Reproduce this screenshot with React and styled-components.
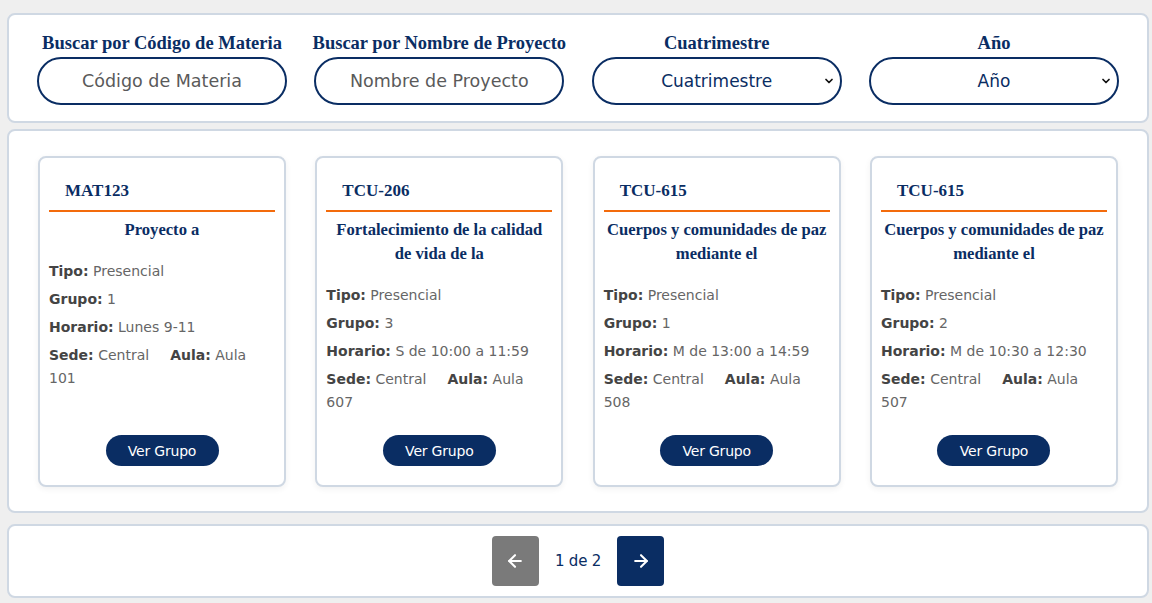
import React from "react";
import styled, { createGlobalStyle } from "styled-components";
import { ArrowLeft, ArrowRight, ChevronDown } from "lucide-react";

const NAVY = "#0a2d63";
const SERIF = `"Liberation Serif", "DejaVu Serif", serif`;
const SANS = `"DejaVu Sans", "Liberation Sans", sans-serif`;

const Global = createGlobalStyle`
  html, body { margin: 0; padding: 0; background: #efefef; }
  body { font-family: ${SANS}; }
  * { box-sizing: border-box; }
`;

const Page = styled.div`
  display: flex;
  flex-direction: column;
  padding: 13px 3px 5px 7px;
`;

const Panel = styled.section`
  background: #fff;
  border: 2px solid #cfd8e3;
  border-radius: 8px;
  margin-bottom: ${(p) => p.$mb || 0}px;
`;

const FilterGrid = styled.div`
  display: grid;
  grid-template-columns: repeat(4, 250px);
  justify-content: space-between;
  padding: 18px 28px 16px;
`;

const Field = styled.div`
  display: flex;
  flex-direction: column;
  align-items: center;
`;

const Label = styled.label`
  font-family: ${SERIF};
  font-weight: bold;
  font-size: 18.5px;
  line-height: 21px;
  color: ${NAVY};
  margin-bottom: 3px;
  white-space: nowrap;
`;

const Input = styled.input`
  width: 250px;
  height: 48px;
  border: 2px solid ${NAVY};
  border-radius: 24px;
  text-align: center;
  font-family: ${SANS};
  font-size: 17.5px;
  color: #555;
  background: #fff;
  outline: none;
  &::placeholder { color: #5a5a5a; }
`;

const SelectWrap = styled.div`
  position: relative;
  width: 250px;
`;

const Select = styled.select`
  appearance: none;
  width: 250px;
  height: 48px;
  border: 2px solid ${NAVY};
  border-radius: 24px;
  text-align: center;
  text-align-last: center;
  font-family: ${SANS};
  font-size: 17px;
  color: ${NAVY};
  background: #fff;
  outline: none;
`;

const Chevron = styled.span`
  position: absolute;
  right: 7px;
  top: 18px;
  display: flex;
  color: #111;
  pointer-events: none;
`;

const CardGrid = styled.div`
  display: grid;
  grid-template-columns: repeat(4, 248px);
  justify-content: space-between;
  padding: 25px 29px 24px 29px;
`;

const Card = styled.article`
  height: 331px;
  display: flex;
  flex-direction: column;
  border: 2px solid #cfd8e3;
  border-radius: 8px;
  padding: 0 9px 19px;
  box-shadow: 0 2px 6px rgba(0, 0, 0, 0.06);
  background: #fff;
`;

const CardHeader = styled.div`
  font-family: ${SERIF};
  font-weight: bold;
  font-size: 17px;
  line-height: 20px;
  color: ${NAVY};
  padding: 23px 0 9px 16px;
  border-bottom: 2px solid #f36b0c;
`;

const CardTitle = styled.h3`
  margin: 6px 0 18px;
  font-family: ${SERIF};
  font-weight: bold;
  font-size: 16.6px;
  line-height: 24px;
  color: ${NAVY};
  text-align: center;
`;

const Detail = styled.p`
  margin: 0 0 5px;
  font-size: 14px;
  line-height: 23px;
  color: #666;
`;

const Key = styled.b`
  font-weight: bold;
  color: #444;
`;

const Gap = styled.span`
  display: inline-block;
  width: 21px;
`;

const Button = styled.button`
  margin: auto auto 0;
  width: 113px;
  height: 31px;
  border: none;
  border-radius: 16px;
  background: ${NAVY};
  color: #fff;
  font-family: ${SANS};
  font-size: 14px;
  letter-spacing: -0.2px;
`;

const Pager = styled.div`
  display: flex;
  align-items: center;
  justify-content: center;
  gap: 16px;
  padding: 10px 0 10px;
`;

const PageBtn = styled.button`
  width: 47px;
  height: 50px;
  border: none;
  border-radius: 4px;
  background: ${(p) => (p.$disabled ? "#7a7a7a" : NAVY)};
  color: #fff;
  display: flex;
  align-items: center;
  justify-content: center;
`;

const PageText = styled.span`
  font-size: 15px;
  color: ${NAVY};
  letter-spacing: -0.2px;
`;

const cards = [
  { code: "MAT123", title: "Proyecto a", grupo: "1", horario: "Lunes 9-11", aula: "101" },
  { code: "TCU-206", title: "Fortalecimiento de la calidad de vida de la", grupo: "3", horario: "S de 10:00 a 11:59", aula: "607" },
  { code: "TCU-615", title: "Cuerpos y comunidades de paz mediante el", grupo: "1", horario: "M de 13:00 a 14:59", aula: "508" },
  { code: "TCU-615", title: "Cuerpos y comunidades de paz mediante el", grupo: "2", horario: "M de 10:30 a 12:30", aula: "507" },
];

export default function App() {
  return (
    <Page>
      <Global />
      <Panel $mb={6}>
        <FilterGrid>
          <Field>
            <Label>Buscar por Código de Materia</Label>
            <Input placeholder="Código de Materia" />
          </Field>
          <Field>
            <Label>Buscar por Nombre de Proyecto</Label>
            <Input placeholder="Nombre de Proyecto" />
          </Field>
          <Field>
            <Label>Cuatrimestre</Label>
            <SelectWrap>
              <Select defaultValue="">
                <option value="">Cuatrimestre</option>
              </Select>
              <Chevron><ChevronDown size={12} strokeWidth={3.5} /></Chevron>
            </SelectWrap>
          </Field>
          <Field>
            <Label>Año</Label>
            <SelectWrap>
              <Select defaultValue="">
                <option value="">Año</option>
              </Select>
              <Chevron><ChevronDown size={12} strokeWidth={3.5} /></Chevron>
            </SelectWrap>
          </Field>
        </FilterGrid>
      </Panel>
      <Panel $mb={11}>
        <CardGrid>
          {cards.map((c, i) => (
            <Card key={i}>
              <CardHeader>{c.code}</CardHeader>
              <CardTitle>{c.title}</CardTitle>
              <Detail><Key>Tipo:</Key> Presencial</Detail>
              <Detail><Key>Grupo:</Key> {c.grupo}</Detail>
              <Detail><Key>Horario:</Key> {c.horario}</Detail>
              <Detail>
                <Key>Sede:</Key> Central<Gap /><Key>Aula:</Key> Aula {c.aula}
              </Detail>
              <Button>Ver Grupo</Button>
            </Card>
          ))}
        </CardGrid>
      </Panel>
      <Panel>
        <Pager>
          <PageBtn $disabled><ArrowLeft size={20} strokeWidth={2.5} /></PageBtn>
          <PageText>1 de 2</PageText>
          <PageBtn><ArrowRight size={20} strokeWidth={2.5} /></PageBtn>
        </Pager>
      </Panel>
    </Page>
  );
}
